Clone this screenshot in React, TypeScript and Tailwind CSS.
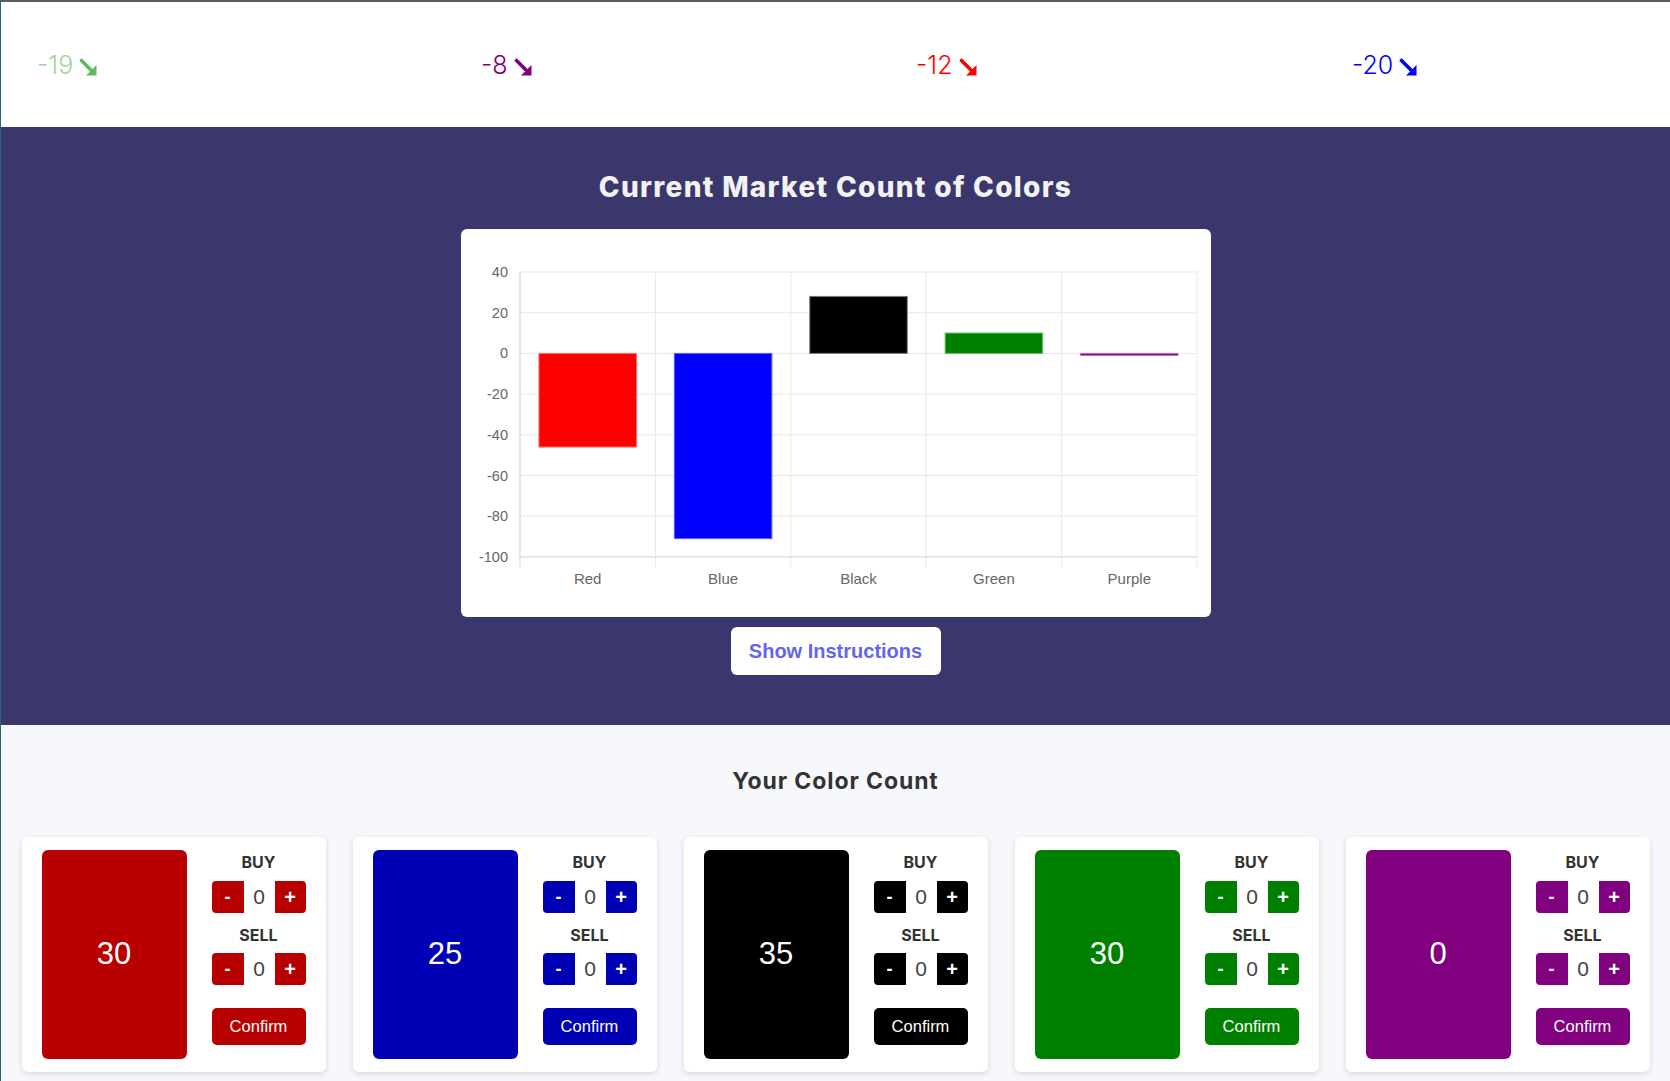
import React from 'react';

const trends = [
  { value: '-19', text: 'text-[#9fd49f]', arrow: '#62b962' },
  { value: '-8', text: 'text-[#800080]', arrow: '#800080' },
  { value: '-12', text: 'text-[#ff0000]', arrow: '#ff0000' },
  { value: '-20', text: 'text-[#0000ff]', arrow: '#0000ff' },
];

const market = [
  { label: 'Red', value: -46, fill: '#ff0000', stroke: '#ff6b6b' },
  { label: 'Blue', value: -91, fill: '#0000ff', stroke: '#5b5bff' },
  { label: 'Black', value: 28, fill: '#000000', stroke: '#777777' },
  { label: 'Green', value: 10, fill: '#008000', stroke: '#5fbf5f' },
  { label: 'Purple', value: -1, fill: '#800080', stroke: '#c070c0' },
];

const holdings = [
  { count: 30, bg: 'bg-[#b80000]' },
  { count: 25, bg: 'bg-[#0000b5]' },
  { count: 35, bg: 'bg-black' },
  { count: 30, bg: 'bg-[#008000]' },
  { count: 0, bg: 'bg-[#800080]' },
];

function DownArrow({ color }: { color: string }) {
  return (
    <svg width="18" height="18" viewBox="0 0 18 18" className="ml-[6px] mt-[4px]">
      <line x1="2.5" y1="2.5" x2="12" y2="12" stroke={color} strokeWidth="3.6" strokeLinecap="round" />
      <polygon points="17.5,17.5 17.5,7 7,17.5" fill={color} />
    </svg>
  );
}

// chart geometry, relative to the white card
const X0 = 59;
const X1 = 736;
const yOf = (v: number) => 43 + ((40 - v) / 20) * 40.7;
const colW = (X1 - X0) / 5;

function MarketChart() {
  const ticks = [40, 20, 0, -20, -40, -60, -80, -100];
  return (
    <svg width="750" height="388" viewBox="0 0 750 388">
      {ticks.map((t) => (
        <g key={t}>
          <line x1={X0} x2={X1} y1={yOf(t)} y2={yOf(t)} stroke={t === -100 ? '#cfcfcf' : '#e8e8e8'} strokeWidth="1" />
          <text x={47} y={yOf(t) + 5} textAnchor="end" fontSize="14.5" fill="#666" fontFamily="'Liberation Sans', Arial, sans-serif">
            {t}
          </text>
        </g>
      ))}
      {[0, 1, 2, 3, 4, 5].map((i) => (
        <line key={i} x1={X0 + colW * i} x2={X0 + colW * i} y1={yOf(40)} y2={yOf(-100) + 10} stroke={i === 0 ? '#cfcfcf' : '#e8e8e8'} strokeWidth="1" />
      ))}
      {market.map((m, i) => {
        const bw = colW * 0.72;
        const x = X0 + colW * i + (colW - bw) / 2;
        const y = Math.min(yOf(0), yOf(m.value));
        const h = Math.max(Math.abs(yOf(m.value) - yOf(0)), 1.5);
        return (
          <g key={m.label}>
            <rect x={x} y={y} width={bw} height={h} fill={m.fill} stroke={m.stroke} strokeWidth="1" />
            <text x={X0 + colW * (i + 0.5)} y={355} textAnchor="middle" fontSize="15" fill="#666" fontFamily="'Liberation Sans', Arial, sans-serif">
              {m.label}
            </text>
          </g>
        );
      })}
    </svg>
  );
}

function Stepper({ bg }: { bg: string }) {
  return (
    <div className={`flex h-[32px] w-[94px] overflow-hidden rounded-[4px] ${bg}`}>
      <button className="w-[32px] text-[18px] font-semibold text-white">-</button>
      <div className="flex w-[31px] items-center justify-center bg-white text-[21px] text-[#444]">0</div>
      <button className="w-[31px] text-[20px] font-semibold text-white">+</button>
    </div>
  );
}

function HoldingCard({ count, bg }: { count: number; bg: string }) {
  return (
    <div className="flex h-[235px] w-[304px] gap-[25px] rounded-[6px] bg-white px-[20px] pt-[13px] shadow-[0_2px_6px_rgba(0,0,0,0.13)]">
      <div className={`flex h-[209px] w-[145px] items-center justify-center rounded-[6px] text-[31px] text-white ${bg}`}>
        {count}
      </div>
      <div className="flex w-[94px] flex-col items-center">
        <div className="mt-[1px] h-[22px] text-[16px] leading-[22px] font-bold text-[#333] font-['Inter',sans-serif]">BUY</div>
        <div className="mt-[8px]">
          <Stepper bg={bg} />
        </div>
        <div className="mt-[11px] h-[22px] text-[16px] leading-[22px] font-bold text-[#333] font-['Inter',sans-serif]">SELL</div>
        <div className="mt-[7px]">
          <Stepper bg={bg} />
        </div>
        <button className={`mt-[23px] h-[37px] w-[94px] rounded-[5px] text-[16.5px] text-white ${bg}`}>Confirm</button>
      </div>
    </div>
  );
}

export default function App() {
  return (
    <div className="min-h-[1081px] w-full border-l border-[#2a6478] bg-[#f7f8fc] font-['Liberation_Sans',Arial,sans-serif]">
      <header className="grid h-[127px] grid-cols-[444px_435px_436px_1fr] items-center border-t-2 border-[#5c5c60] bg-white pl-[36px]">
        {trends.map((t) => (
          <div key={t.value} className="flex items-center">
            <span className={`text-[25px] leading-[30px] font-light font-['Inter',sans-serif] ${t.text}`}>{t.value}</span>
            <DownArrow color={t.arrow} />
          </div>
        ))}
      </header>

      <section className="flex flex-col items-center bg-[#3a376c] pt-[42px] pb-[50px]">
        <h1 className="h-[36px] text-[28px] leading-[36px] font-extrabold tracking-[1.3px] text-[#f2f2f2] font-['Inter',sans-serif]">
          Current Market Count of Colors
        </h1>
        <div className="mt-[24px] h-[388px] w-[750px] rounded-[6px] bg-white">
          <MarketChart />
        </div>
        <button className="mt-[10px] h-[48px] w-[210px] rounded-[6px] bg-white text-[20px] font-bold text-[#6366e8]">
          Show Instructions
        </button>
      </section>

      <section className="flex flex-col items-center pt-[40px] pb-[9px]">
        <h2 className="h-[32px] text-[23px] leading-[32px] font-bold tracking-[0.9px] text-[#333] font-['Inter',sans-serif]">Your Color Count</h2>
        <div className="mt-[40px] flex gap-[27px]">
          {holdings.map((h, i) => (
            <HoldingCard key={i} count={h.count} bg={h.bg} />
          ))}
        </div>
      </section>
    </div>
  );
}
